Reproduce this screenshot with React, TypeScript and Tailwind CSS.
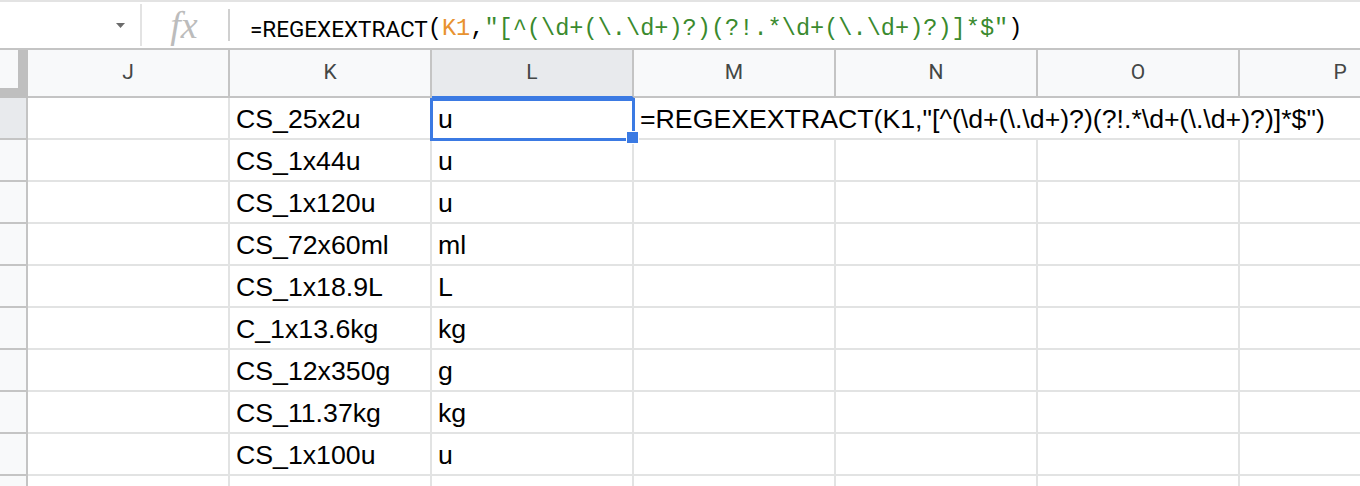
import React from "react";

const rows: [string, string][] = [
  ["CS_25x2u", "u"],
  ["CS_1x44u", "u"],
  ["CS_1x120u", "u"],
  ["CS_72x60ml", "ml"],
  ["CS_1x18.9L", "L"],
  ["C_1x13.6kg", "kg"],
  ["CS_12x350g", "g"],
  ["CS_11.37kg", "kg"],
  ["CS_1x100u", "u"],
  ["", ""],
];

const cols = ["J", "K", "L", "M", "N", "O", "P"];

const cellFont = { fontFamily: '"Liberation Sans", Arial, sans-serif' };

function Cell({ text, extra = "" }: { text: string; extra?: string }) {
  return (
    <div
      className={`w-[202px] shrink-0 h-[42px] border-r-2 border-b-2 border-[#e2e3e3] flex items-end pl-[6px] pb-[4px] text-[26.7px] leading-[30px] text-black whitespace-nowrap ${extra}`}
      style={cellFont}
    >
      {text}
    </div>
  );
}

export default function App() {
  const formula = '=REGEXEXTRACT(K1,"[^(\\d+(\\.\\d+)?)(?!.*\\d+(\\.\\d+)?)]*$")';
  return (
    <div className="w-[1360px] h-[486px] overflow-hidden bg-white relative">
      {/* Formula bar */}
      <div className="h-[48px] border-t-2 border-[#e3e3e3] flex items-stretch bg-white">
        <div className="w-[140px] shrink-0 flex items-center justify-end pr-[15px]">
          <svg width="9" height="5" viewBox="0 0 9 5">
            <path d="M0 0 L9 0 L4.5 5 Z" fill="#6b6b6b" />
          </svg>
        </div>
        <div className="w-[2px] my-[2px] bg-[#e3e3e3]" />
        <div className="w-[86px] shrink-0 flex items-center justify-center pr-[2px]">
          <span
            className="italic text-[38px] leading-[40px] text-[#bcbcbc]"
            style={{ fontFamily: '"Liberation Serif", "Times New Roman", serif' }}
          >
            fx
          </span>
        </div>
        <div className="w-[2px] my-[7px] bg-[#d0d0d0]" />
        <div className="flex items-center pl-[20px] pt-[8px] whitespace-nowrap">
          <span className="text-[22.5px] leading-[26px] text-black" style={{ fontFamily: "Roboto, Arial, sans-serif" }}>
            =REGEXEXTRACT
          </span>
          <span
            className="text-[23.6px] leading-[26px]"
            style={{ fontFamily: '"Liberation Mono", "DejaVu Sans Mono", monospace' }}
          >
            <span className="text-black">(</span>
            <span className="text-[#e8922f]">K1</span>
            <span className="text-black">,</span>
            <span className="text-[#3a8a2e]">{'"[^(\\d+(\\.\\d+)?)(?!.*\\d+(\\.\\d+)?)]*$"'}</span>
            <span className="text-black">)</span>
          </span>
        </div>
      </div>

      {/* Column header */}
      <div className="flex h-[50px] border-t-2 border-[#c4c4c4]">
        <div className="w-[28px] shrink-0 h-[48px] bg-[#bfbfbf]">
          <div className="w-[18px] h-[38px] bg-[#f8f9fa]" />
        </div>
        {cols.map((c) => (
          <div
            key={c}
            className={`w-[202px] shrink-0 h-[48px] border-r-2 border-[#c4c4c4] border-b-2 flex items-center justify-center text-[21px] text-[#444746] ${
              c === "L" ? "bg-[#e8eaed] border-b-[#3b7ae3]" : "bg-[#f8f9fa] border-b-[#c4c4c4]"
            }`}
            style={{ fontFamily: "Roboto, Arial, sans-serif" }}
          >
            {c}
          </div>
        ))}
      </div>

      {/* Body */}
      <div className="flex flex-col">
        {rows.map(([k, l], i) => (
          <div key={i} className="flex h-[42px]">
            <div
              className={`w-[28px] shrink-0 h-[42px] border-r-2 border-b-2 border-[#c4c4c4] ${
                i === 0 ? "bg-[#e8eaed]" : "bg-[#f8f9fa]"
              }`}
            />
            <Cell text="" />
            <Cell text={k} />
            {i === 0 ? (
              <div className="relative w-[202px] shrink-0">
                <Cell text={l} />
                <div className="absolute left-[-2px] top-0 w-[205px] h-[43px] border-[3px] border-[#3b7ae3]" />
                <div className="absolute left-[194px] top-[33px] w-[13px] h-[13px] bg-[#3b7ae3] border border-white" />
              </div>
            ) : (
              <Cell text={l} />
            )}
            {i === 0 ? (
              <div
                className="flex-1 h-[42px] border-b-2 border-[#e2e3e3] flex items-end pl-[6px] pb-[4px] text-[26.7px] leading-[30px] text-black whitespace-nowrap"
                style={cellFont}
              >
                {formula}
              </div>
            ) : (
              <>
                <Cell text="" />
                <Cell text="" />
                <Cell text="" />
                <Cell text="" />
              </>
            )}
          </div>
        ))}
      </div>
    </div>
  );
}
